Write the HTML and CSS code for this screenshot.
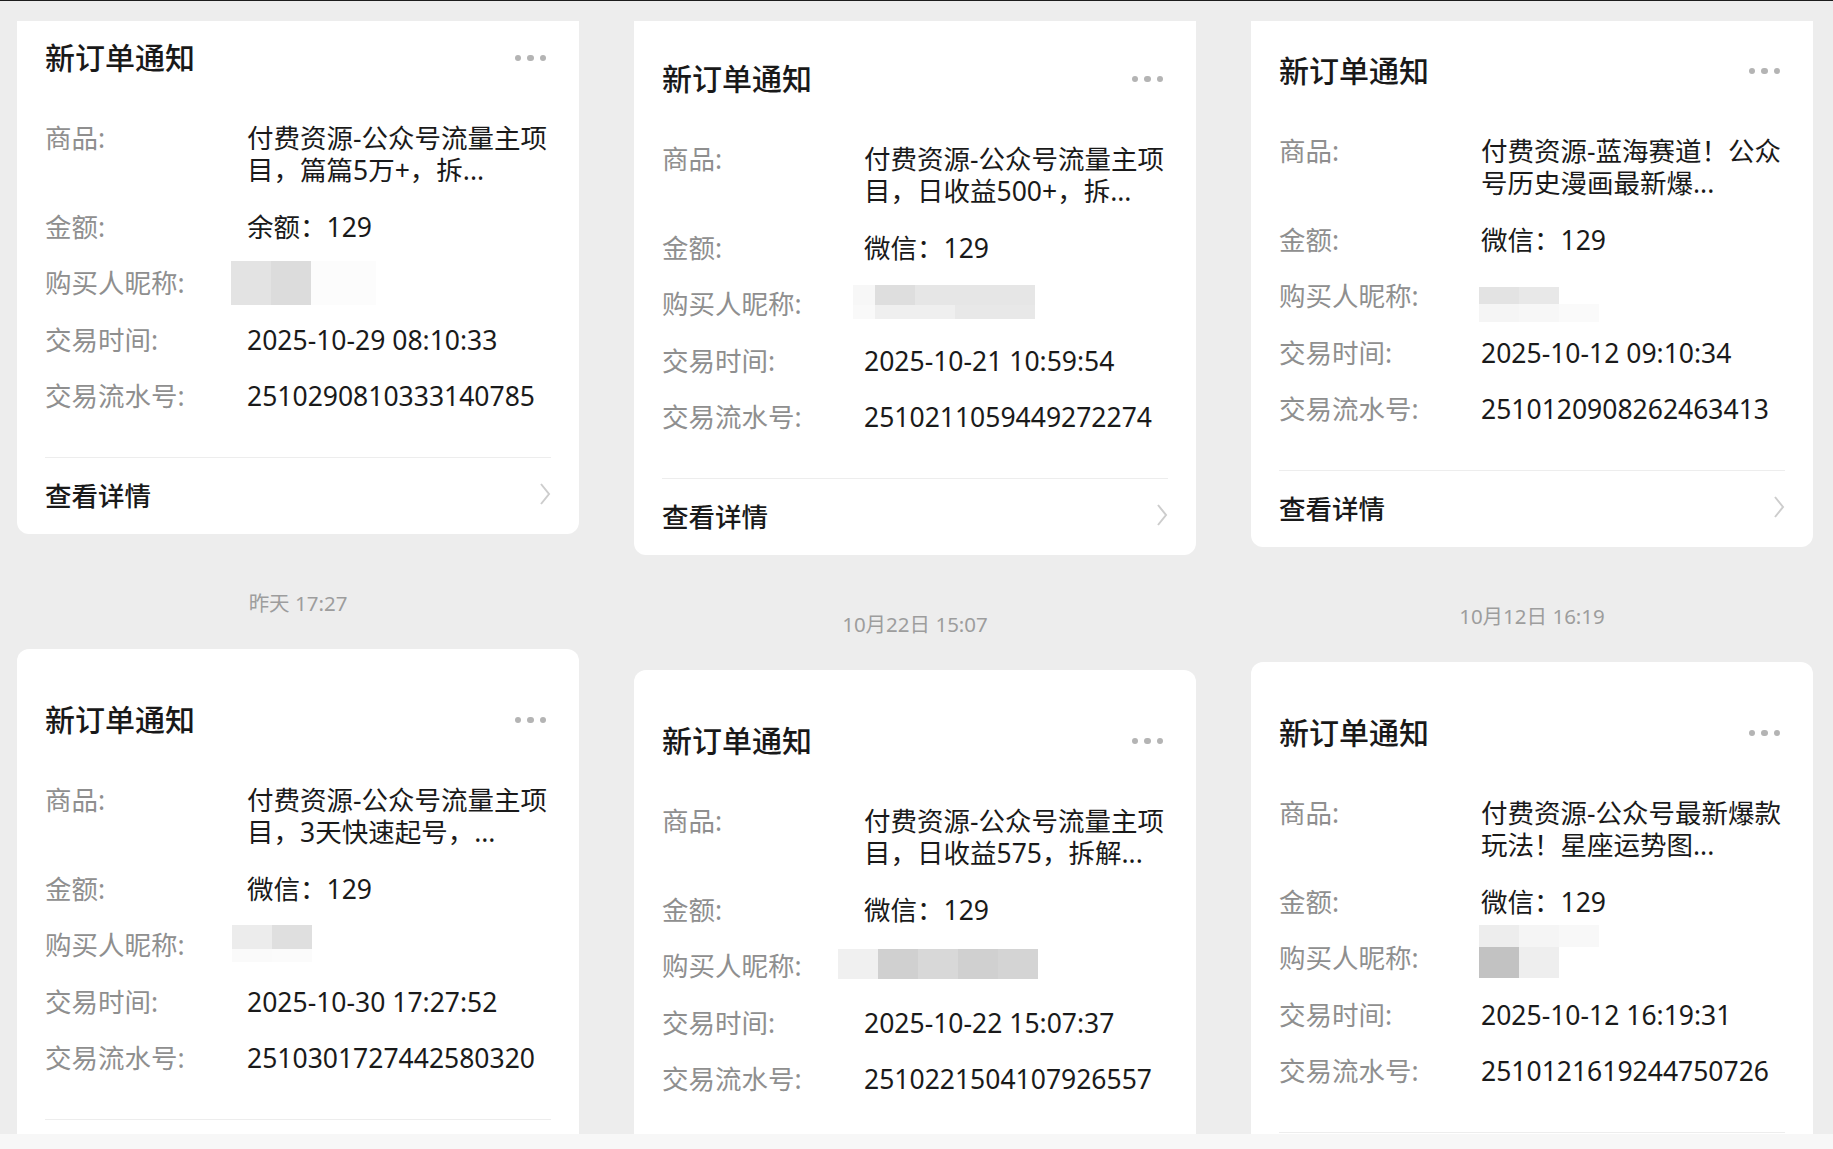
FILE: index.html
```html
<!DOCTYPE html>
<html lang="zh-CN">
<head>
    <meta charset="UTF-8">
    <meta name="viewport" content="width=device-width, initial-scale=1.0">
    <title>新订单通知</title>
    <link rel="stylesheet" href="styles.css">
</head>
<body>
    <div class="topline"></div>

    <main class="screens">
        <!-- screen 1 -->
        <section class="screen screen-a">
            <div class="feed">
                <article class="card">
                    <header class="card-head">
                        <h2>新订单通知</h2>
                        <span class="more"><i></i><i></i><i></i></span>
                    </header>
                    <dl class="fields">
                        <dt>商品:</dt>
                        <dd>付费资源-公众号流量主项目，篇篇5万+，拆...</dd>
                        <dt>金额:</dt>
                        <dd>余额：129</dd>
                        <dt>购买人昵称:</dt>
                        <dd class="nick">
                            <div class="mosaic m1">
                                <div class="mosaic-row"><span class="s-e3"></span><span class="s-dd"></span><span class="s-fc wide"></span></div>
                            </div>
                        </dd>
                        <dt>交易时间:</dt>
                        <dd>2025-10-29 08:10:33</dd>
                        <dt>交易流水号:</dt>
                        <dd>2510290810333140785</dd>
                    </dl>
                    <footer class="card-foot">
                        <span>查看详情</span>
                        <svg class="chevron" width="12" height="24" viewBox="0 0 12 24"><polyline points="2,2 10,12 2,22" /></svg>
                    </footer>
                </article>

                <div class="time">昨天 17:27</div>

                <article class="card">
                    <header class="card-head">
                        <h2>新订单通知</h2>
                        <span class="more"><i></i><i></i><i></i></span>
                    </header>
                    <dl class="fields">
                        <dt>商品:</dt>
                        <dd>付费资源-公众号流量主项目，3天快速起号，...</dd>
                        <dt>金额:</dt>
                        <dd>微信：129</dd>
                        <dt>购买人昵称:</dt>
                        <dd class="nick">
                            <div class="mosaic m4">
                                <div class="mosaic-row"><span class="s-ec"></span><span class="s-df"></span></div>
                                <div class="mosaic-row"><span class="s-fa"></span><span class="s-fb"></span></div>
                            </div>
                        </dd>
                        <dt>交易时间:</dt>
                        <dd>2025-10-30 17:27:52</dd>
                        <dt>交易流水号:</dt>
                        <dd>2510301727442580320</dd>
                    </dl>
                    <!-- rest of the card is scrolled out of the screenshot -->
                    <footer class="card-foot"></footer>
                </article>
            </div>
        </section>

        <!-- screen 2 -->
        <section class="screen screen-b">
            <div class="feed">
                <article class="card">
                    <header class="card-head">
                        <h2>新订单通知</h2>
                        <span class="more"><i></i><i></i><i></i></span>
                    </header>
                    <dl class="fields">
                        <dt>商品:</dt>
                        <dd>付费资源-公众号流量主项目，日收益500+，拆...</dd>
                        <dt>金额:</dt>
                        <dd>微信：129</dd>
                        <dt>购买人昵称:</dt>
                        <dd class="nick">
                            <div class="mosaic m2">
                                <div class="mosaic-row"><span class="s-f7 narrow"></span><span class="s-de"></span><span class="s-e6"></span><span class="s-e6"></span><span class="s-e6"></span></div>
                                <div class="mosaic-row"><span class="s-f9 narrow"></span><span class="s-ef"></span><span class="s-ef"></span><span class="s-e8"></span><span class="s-e8"></span></div>
                            </div>
                        </dd>
                        <dt>交易时间:</dt>
                        <dd>2025-10-21 10:59:54</dd>
                        <dt>交易流水号:</dt>
                        <dd>2510211059449272274</dd>
                    </dl>
                    <footer class="card-foot">
                        <span>查看详情</span>
                        <svg class="chevron" width="12" height="24" viewBox="0 0 12 24"><polyline points="2,2 10,12 2,22" /></svg>
                    </footer>
                </article>

                <div class="time">10月22日 15:07</div>

                <article class="card">
                    <header class="card-head">
                        <h2>新订单通知</h2>
                        <span class="more"><i></i><i></i><i></i></span>
                    </header>
                    <dl class="fields">
                        <dt>商品:</dt>
                        <dd>付费资源-公众号流量主项目，日收益575，拆解...</dd>
                        <dt>金额:</dt>
                        <dd>微信：129</dd>
                        <dt>购买人昵称:</dt>
                        <dd class="nick">
                            <div class="mosaic m5">
                                <div class="mosaic-row"><span class="s-f0"></span><span class="s-d0"></span><span class="s-d8"></span><span class="s-d0"></span><span class="s-d4"></span></div>
                            </div>
                        </dd>
                        <dt>交易时间:</dt>
                        <dd>2025-10-22 15:07:37</dd>
                        <dt>交易流水号:</dt>
                        <dd>2510221504107926557</dd>
                    </dl>
                    <footer class="card-foot"></footer>
                </article>
            </div>
        </section>

        <!-- screen 3 -->
        <section class="screen screen-c">
            <div class="feed">
                <article class="card">
                    <header class="card-head">
                        <h2>新订单通知</h2>
                        <span class="more"><i></i><i></i><i></i></span>
                    </header>
                    <dl class="fields">
                        <dt>商品:</dt>
                        <dd>付费资源-蓝海赛道！公众号历史漫画最新爆...</dd>
                        <dt>金额:</dt>
                        <dd>微信：129</dd>
                        <dt>购买人昵称:</dt>
                        <dd class="nick">
                            <div class="mosaic m3">
                                <div class="mosaic-row"><span class="s-e3"></span><span class="s-e8"></span></div>
                                <div class="mosaic-row"><span class="s-f5"></span><span class="s-f7"></span><span class="s-fa"></span></div>
                            </div>
                        </dd>
                        <dt>交易时间:</dt>
                        <dd>2025-10-12 09:10:34</dd>
                        <dt>交易流水号:</dt>
                        <dd>2510120908262463413</dd>
                    </dl>
                    <footer class="card-foot">
                        <span>查看详情</span>
                        <svg class="chevron" width="12" height="24" viewBox="0 0 12 24"><polyline points="2,2 10,12 2,22" /></svg>
                    </footer>
                </article>

                <div class="time">10月12日 16:19</div>

                <article class="card">
                    <header class="card-head">
                        <h2>新订单通知</h2>
                        <span class="more"><i></i><i></i><i></i></span>
                    </header>
                    <dl class="fields">
                        <dt>商品:</dt>
                        <dd>付费资源-公众号最新爆款玩法！星座运势图...</dd>
                        <dt>金额:</dt>
                        <dd>微信：129</dd>
                        <dt>购买人昵称:</dt>
                        <dd class="nick">
                            <div class="mosaic m6">
                                <div class="mosaic-row"><span class="s-ed"></span><span class="s-f5"></span><span class="s-f8"></span></div>
                                <div class="mosaic-row"><span class="s-c2"></span><span class="s-ee"></span></div>
                            </div>
                        </dd>
                        <dt>交易时间:</dt>
                        <dd>2025-10-12 16:19:31</dd>
                        <dt>交易流水号:</dt>
                        <dd>2510121619244750726</dd>
                    </dl>
                    <footer class="card-foot"></footer>
                </article>
            </div>
        </section>
    </main>

    <div class="navbar"></div>
</body>
</html>
```

FILE: styles.css
```css
* { margin: 0; padding: 0; box-sizing: border-box; }

body {
    background: #ededed;
    font-family: "Noto Sans", "Noto Sans CJK SC", sans-serif;
    color: #1a1a1a;
    overflow: hidden;
}

.topline { height: 1px; background: #1c1c1c; }

.screens {
    display: grid;
    grid-template-columns: repeat(3, 562px);
    grid-template-rows: minmax(0, 1fr);
    column-gap: 55px;
    height: 1133px;
    padding: 20px 20px 0 17px;
}

.screen { overflow: hidden; }

/* each screenshot is scrolled a little differently */
.screen-a .feed { margin-top: -34px; }
.screen-b .feed { margin-top: -13px; }
.screen-c .feed { margin-top: -21px; }

.card {
    background: #fff;
    border-radius: 12px;
    padding: 0 28px;
}

.card-head {
    display: flex;
    justify-content: space-between;
    align-items: center;
    padding-top: 52px;
}
.card-head h2 {
    font-size: 30px;
    line-height: 38px;
    font-weight: 500;
    color: #191919;
}

.more { display: flex; gap: 6px; margin-right: 5px; }
.more i {
    width: 6.5px;
    height: 6.5px;
    border-radius: 50%;
    background: #b4b4b4;
}

.fields {
    display: grid;
    grid-template-columns: 202px 1fr;
    row-gap: 24.5px;
    margin-top: 45px;
    font-size: 26.5px;
    line-height: 32px;
}
.fields dt { color: #8f8f8f; }
.fields dd { color: #1a1a1a; }
.fields dd.nick { height: 32px; }

.card-foot {
    display: flex;
    justify-content: space-between;
    align-items: center;
    height: 77px;
    margin-top: 45px;
    padding-bottom: 4px;
    border-top: 1px solid #ededed;
    font-size: 26.5px;
    font-weight: 500;
}
.chevron { fill: none; stroke: #cdcdcd; stroke-width: 2; }

.time {
    margin: 57px 0 34px;
    text-align: center;
    font-size: 20.5px;
    line-height: 24px;
    color: #9d9d9d;
}

.navbar { height: 15px; background: #f7f7f7; }

/* pixelated nicknames */
.mosaic { display: flex; flex-direction: column; }
.mosaic-row { display: flex; }
.mosaic-row span { width: 40px; }
.mosaic-row span.narrow { width: 22px; }
.mosaic-row span.wide { width: 65px; }

.m1 { margin: -6px 0 0 -16px; }
.m1 .mosaic-row { height: 44px; }
.m2 { margin: -3px 0 0 -11px; }
.m2 .mosaic-row:first-child { height: 20px; }
.m2 .mosaic-row:last-child { height: 14px; }
.m3 { margin: 7px 0 0 -2px; }
.m3 .mosaic-row:first-child { height: 17px; }
.m3 .mosaic-row:last-child { height: 18px; }
.m4 { margin: -4px 0 0 -15px; }
.m4 .mosaic-row:first-child { height: 24px; }
.m4 .mosaic-row:last-child { height: 13px; }
.m5 { margin: -1px 0 0 -26px; }
.m5 .mosaic-row { height: 30px; }
.m6 { margin: -17px 0 0 -2px; }
.m6 .mosaic-row:first-child { height: 22px; }
.m6 .mosaic-row:last-child { height: 31px; }

.s-fc { background: #fcfcfc; }
.s-fb { background: #fbfbfb; }
.s-fa { background: #fafafa; }
.s-f9 { background: #f9f9f9; }
.s-f8 { background: #f8f8f8; }
.s-f7 { background: #f7f7f7; }
.s-f5 { background: #f5f5f5; }
.s-f0 { background: #f0f0f0; }
.s-ef { background: #efefef; }
.s-ee { background: #eeeeee; }
.s-ed { background: #ededed; }
.s-ec { background: #ececec; }
.s-e8 { background: #e8e8e8; }
.s-e6 { background: #e6e6e6; }
.s-e3 { background: #e3e3e3; }
.s-df { background: #dfdfdf; }
.s-de { background: #dedede; }
.s-dd { background: #dcdcdc; }
.s-d8 { background: #d8d8d8; }
.s-d4 { background: #d4d4d4; }
.s-d0 { background: #d0d0d0; }
.s-c2 { background: #c2c2c2; }
```
